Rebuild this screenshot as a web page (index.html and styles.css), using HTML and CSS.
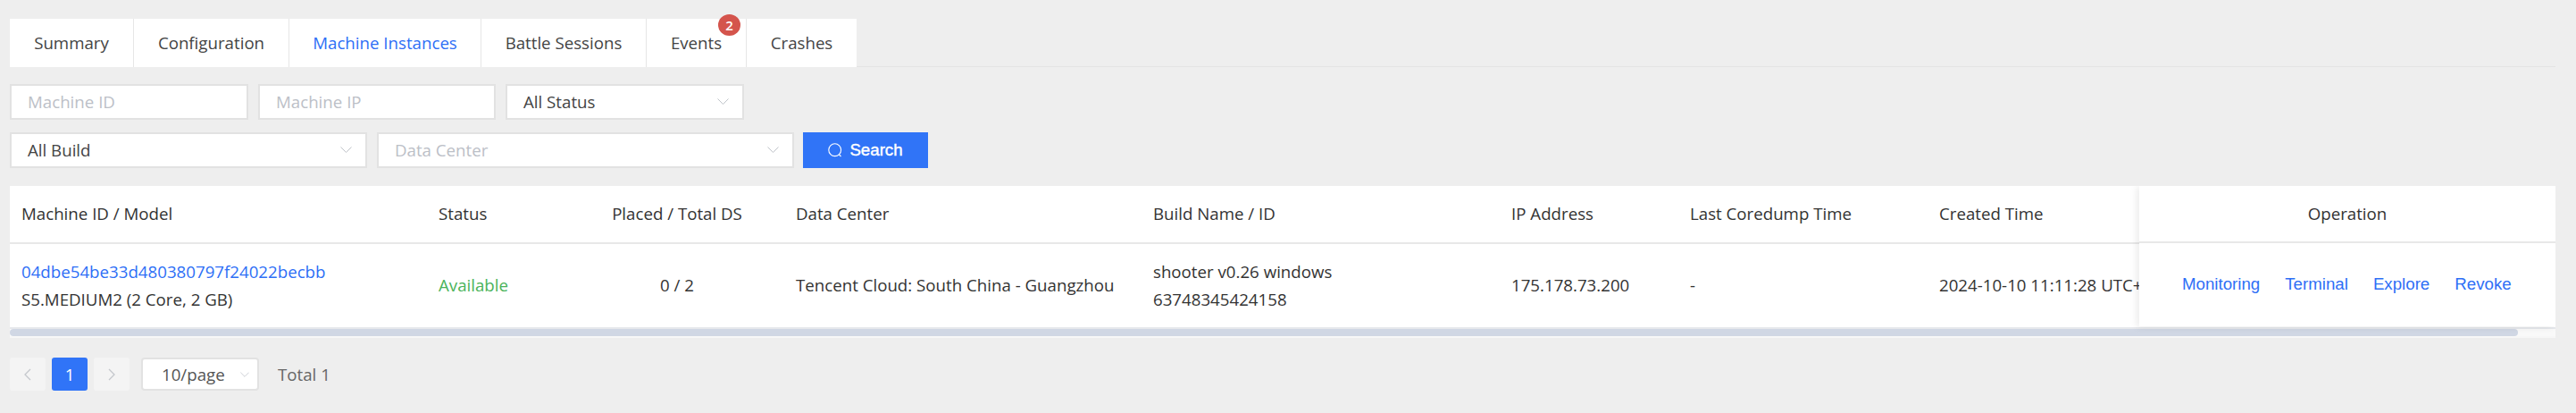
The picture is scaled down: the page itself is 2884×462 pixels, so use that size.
FILE: index.html
```html
<!DOCTYPE html>
<html lang="en">
<head>
<meta charset="utf-8">
<title>Machine Instances</title>
<link rel="stylesheet" href="styles.css">
</head>
<body>
<div class="page">
  <nav class="tabs">
    <a class="tab w-summary">Summary</a>
    <a class="tab w-config">Configuration</a>
    <a class="tab w-machine active">Machine Instances</a>
    <a class="tab w-battle">Battle Sessions</a>
    <a class="tab w-events">Events<span class="badge">2</span></a>
    <a class="tab w-crashes">Crashes</a>
  </nav>
  <div class="filters">
    <div class="filter-row">
      <div class="field w-267 placeholder">Machine ID</div>
      <div class="field w-266 placeholder">Machine IP</div>
      <div class="field w-267 select">All Status
        <svg class="chev" viewBox="0 0 13 7"><path d="M.5.5l6 6 6-6"/></svg>
      </div>
    </div>
    <div class="filter-row">
      <div class="field w-400 select">All Build
        <svg class="chev" viewBox="0 0 13 7"><path d="M.5.5l6 6 6-6"/></svg>
      </div>
      <div class="field w-467 select placeholder">Data Center
        <svg class="chev" viewBox="0 0 13 7"><path d="M.5.5l6 6 6-6"/></svg>
      </div>
      <button class="search">
        <svg class="search-icon" viewBox="0 0 16 16"><circle cx="7.7" cy="7.7" r="6.9"/><path d="M12.5 13l2 2"/></svg>
        Search
      </button>
    </div>
  </div>
  <div class="table-card">
    <table class="grid">
      <colgroup>
        <col class="c1"><col class="c2"><col class="c3"><col class="c4"><col class="c5"><col class="c6"><col class="c7"><col class="c8"><col class="c9">
      </colgroup>
      <thead>
        <tr>
          <th>Machine ID / Model</th>
          <th>Status</th>
          <th class="center">Placed / Total DS</th>
          <th>Data Center</th>
          <th>Build Name / ID</th>
          <th>IP Address</th>
          <th>Last Coredump Time</th>
          <th>Created Time</th>
          <th></th>
        </tr>
      </thead>
      <tbody>
        <tr>
          <td><a class="link">04dbe54be33d480380797f24022becbb</a><br>S5.MEDIUM2 (2 Core, 2 GB)</td>
          <td class="ok">Available</td>
          <td class="center">0 / 2</td>
          <td>Tencent Cloud: South China - Guangzhou</td>
          <td>shooter v0.26 windows<br>63748345424158</td>
          <td>175.178.73.200</td>
          <td>-</td>
          <td class="nowrap">2024-10-10 11:11:28 UTC+8</td>
          <td></td>
        </tr>
      </tbody>
    </table>
    <div class="fixed-col">
      <div class="fixed-head">Operation</div>
      <div class="fixed-body">
        <a class="op">Monitoring</a>
        <a class="op">Terminal</a>
        <a class="op">Explore</a>
        <a class="op">Revoke</a>
      </div>
    </div>
    <div class="scrollbar"><div class="thumb"></div></div>
  </div>
  <div class="pager">
    <button class="page-btn"><svg class="arrow" viewBox="0 0 8 14"><path d="M7 1L1 7l6 6"/></svg></button>
    <button class="page-btn current">1</button>
    <button class="page-btn"><svg class="arrow" viewBox="0 0 8 14"><path d="M1 1l6 6-6 6"/></svg></button>
    <div class="page-size">10/page
      <svg class="chev" viewBox="0 0 13 7"><path d="M.5.5l6 6 6-6"/></svg>
    </div>
    <span class="total">Total 1</span>
  </div>
</div>
</body>
</html>
```
FILE: styles.css
```css
* { box-sizing: border-box; }
html, body { margin: 0; height: 100%; }
body { background: #eeeeee; color: #333; font-family: "Open Sans", "Noto Sans", sans-serif; font-size: 18.7px; overflow: hidden; }
.page { padding: 21px 23px 0 11px; width: 2884px; }
.tabs { display: flex; height: 54px; border-bottom: 1px solid #e4e4e4; }
.tab { height: 54px; padding-bottom: 2px; display: flex; align-items: center; justify-content: center; background: #fff; border-right: 1px solid #e6e6e6; color: #444; position: relative; flex: none; }
.tab.active { color: #2e6ff6; }
.w-summary { width: 139px; }
.w-config { width: 174px; }
.w-machine { width: 215px; }
.w-battle { width: 185px; }
.w-events { width: 112px; }
.w-crashes { width: 123px; border-right: 0; }
.badge { position: absolute; top: -5px; right: 6px; width: 25px; height: 24px; border-radius: 50%; background: #d4544c; color: #fff; font-size: 15px; font-weight: 600; display: flex; align-items: center; justify-content: center; }
.filters { margin-top: 19px; display: flex; flex-direction: column; gap: 14px; }
.filter-row { display: flex; gap: 11px; }
.field { height: 40px; background: #fff; border: 2px solid #e2e2e2; padding: 0 0 1px 18px; display: flex; align-items: center; justify-content: space-between; color: #444; flex: none; }
.placeholder { color: #bcc0c7; }
.w-266 { width: 266px; }
.w-267 { width: 267px; }
.w-400 { width: 400px; }
.w-467 { width: 467px; }
.chev { width: 13px; height: 7px; margin-right: 15px; fill: none; stroke: #bfc3c9; stroke-width: 1; }
.search { width: 140px; height: 40px; border: 0; background: #3074f7; color: #fff; font-family: "Liberation Sans", sans-serif; font-size: 18.7px; -webkit-text-stroke: 0.4px #fff; display: flex; align-items: center; justify-content: center; gap: 8px; margin-left: -1px; padding: 0; }
.search-icon { width: 16px; height: 16px; fill: none; stroke: #fff; stroke-width: 1.1; }
.table-card { margin-top: 20px; background: #f7f7f7; position: relative; width: 2850px; padding-bottom: 2px; overflow: hidden; }
.grid { width: 2850px; border-collapse: collapse; table-layout: fixed; background: #fff; }
.c1 { width: 467px; } .c2 { width: 160px; } .c3 { width: 240px; } .c4 { width: 400px; } .c5 { width: 401px; } .c6 { width: 200px; } .c7 { width: 279px; } .c8 { width: 237px; } .c9 { width: 466px; }
th, td { text-align: left; padding: 0 13px 2px; font-weight: 400; }
th { height: 64px; border-bottom: 2px solid #e8e8e8; }
td { height: 95px; line-height: 31px; border-bottom: 2px solid #e6e8ec; white-space: nowrap; }
.center { text-align: center; }
.link { color: #2e6ff6; }
.ok { color: #4bb35a; }
.fixed-col { position: absolute; top: 0; right: 0; height: 157px; width: 466px; background: #fff; box-shadow: -3px 1px 8px rgba(0,0,0,0.08); text-align: center; }
.fixed-head { height: 64px; padding-bottom: 2px; border-bottom: 2px solid #e8e8e8; display: flex; align-items: center; justify-content: center; }
.fixed-body { height: 91px; display: flex; align-items: center; gap: 28px; padding-left: 48px; font-family: "Liberation Sans", sans-serif; }
.op { color: #2e6ff6; }
.scrollbar { height: 8px; background: #f9f9f9; }
.thumb { width: 2808px; height: 8px; background: #d0d7e4; border-radius: 4px; }
.pager { margin-top: 22px; display: flex; align-items: center; gap: 7px; }
.page-btn { width: 40px; height: 37px; border: 0; border-radius: 3px; background: #f4f4f4; color: #333; font-family: inherit; font-size: 18.7px; display: flex; align-items: center; justify-content: center; padding: 0; }
.page-btn.current { background: #3074f7; color: #fff; }
.arrow { width: 8px; height: 14px; fill: none; stroke: #c4c7cc; stroke-width: 1.3; }
.page-size { margin-left: 6px; width: 132px; height: 37px; background: #fff; border: 2px solid #e2e2e2; border-radius: 4px; display: flex; align-items: center; justify-content: space-between; padding-left: 21px; color: #555; }
.page-size .chev { margin-right: 9px; width: 10px; height: 6px; }
.total { margin-left: 14px; color: #666; }
```
